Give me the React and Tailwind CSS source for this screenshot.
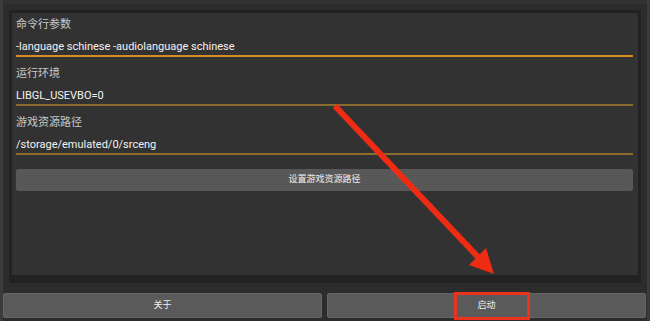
import React from 'react';

const font = { fontFamily: 'Roboto, "Noto Sans CJK SC", sans-serif' };

function Field({ label, value, focused }) {
  return (
    <div>
      <div className="h-[20px] flex items-center pt-[4px] text-[11px] text-[#c9c9c9]">{label}</div>
      <div
        className={`h-[24px] flex items-center pt-[6px] text-[11px] text-[#f2f2f2] border-b-2 ${
          focused ? 'border-[#d98a25]' : 'border-[#8c6b2f]'
        }`}
      >
        {value}
      </div>
      <div className="h-[5px]" />
    </div>
  );
}

function App() {
  return (
    <div
      className="relative w-[650px] h-[321px] overflow-hidden bg-[#2c2c2c] border-l-[3px] border-r-[3px] border-[#3b3b3b]"
      style={font}
    >
      <div className="h-[4px] bg-[#313131]" />

      {/* main panel */}
      <div className="ml-[6px] mt-[6px] w-[632px] h-[273px] border-t-[3px] border-l-[3px] border-r-[3px] border-b-[8px] border-[#222222] bg-[#323232]">
        <div className="pl-[4px] pr-[5px]">
          <Field label="命令行参数" value="-language schinese -audiolanguage schinese" focused />
          <Field label="运行环境" value="LIBGL_USEVBO=0" />
          <Field label="游戏资源路径" value="/storage/emulated/0/srceng" />
          <button className="mt-[9px] w-full h-[22px] bg-[#585858] rounded-[2px] text-[9px] text-[#f0f0f0] flex items-center justify-center">
            设置游戏资源路径
          </button>
        </div>
      </div>

      {/* bottom buttons */}
      <div className="mt-[10px] flex gap-[5px] pr-[1px]">
        <button className="flex-1 h-[25px] bg-[#5a5a5a] border border-[#666666] rounded-[2px] text-[9px] text-[#f0f0f0] flex items-center justify-center">
          关于
        </button>
        <button className="flex-1 h-[25px] bg-[#5a5a5a] border border-[#666666] rounded-[2px] text-[9px] text-[#f0f0f0] flex items-center justify-center">
          启动
        </button>
      </div>

      {/* annotation overlay */}
      <div className="absolute left-[451px] top-[292px] w-[76px] h-[28px] border-[3px] border-[#e8341c] pointer-events-none" />
      <svg className="absolute -left-[3px] top-0 pointer-events-none" width="650" height="321">
        <line x1="335" y1="106" x2="479" y2="258" stroke="#ee2c14" strokeWidth="6" />
        <polygon points="494,274 486,248 469,265" fill="#ee2c14" />
      </svg>
    </div>
  );
}

export default App;
